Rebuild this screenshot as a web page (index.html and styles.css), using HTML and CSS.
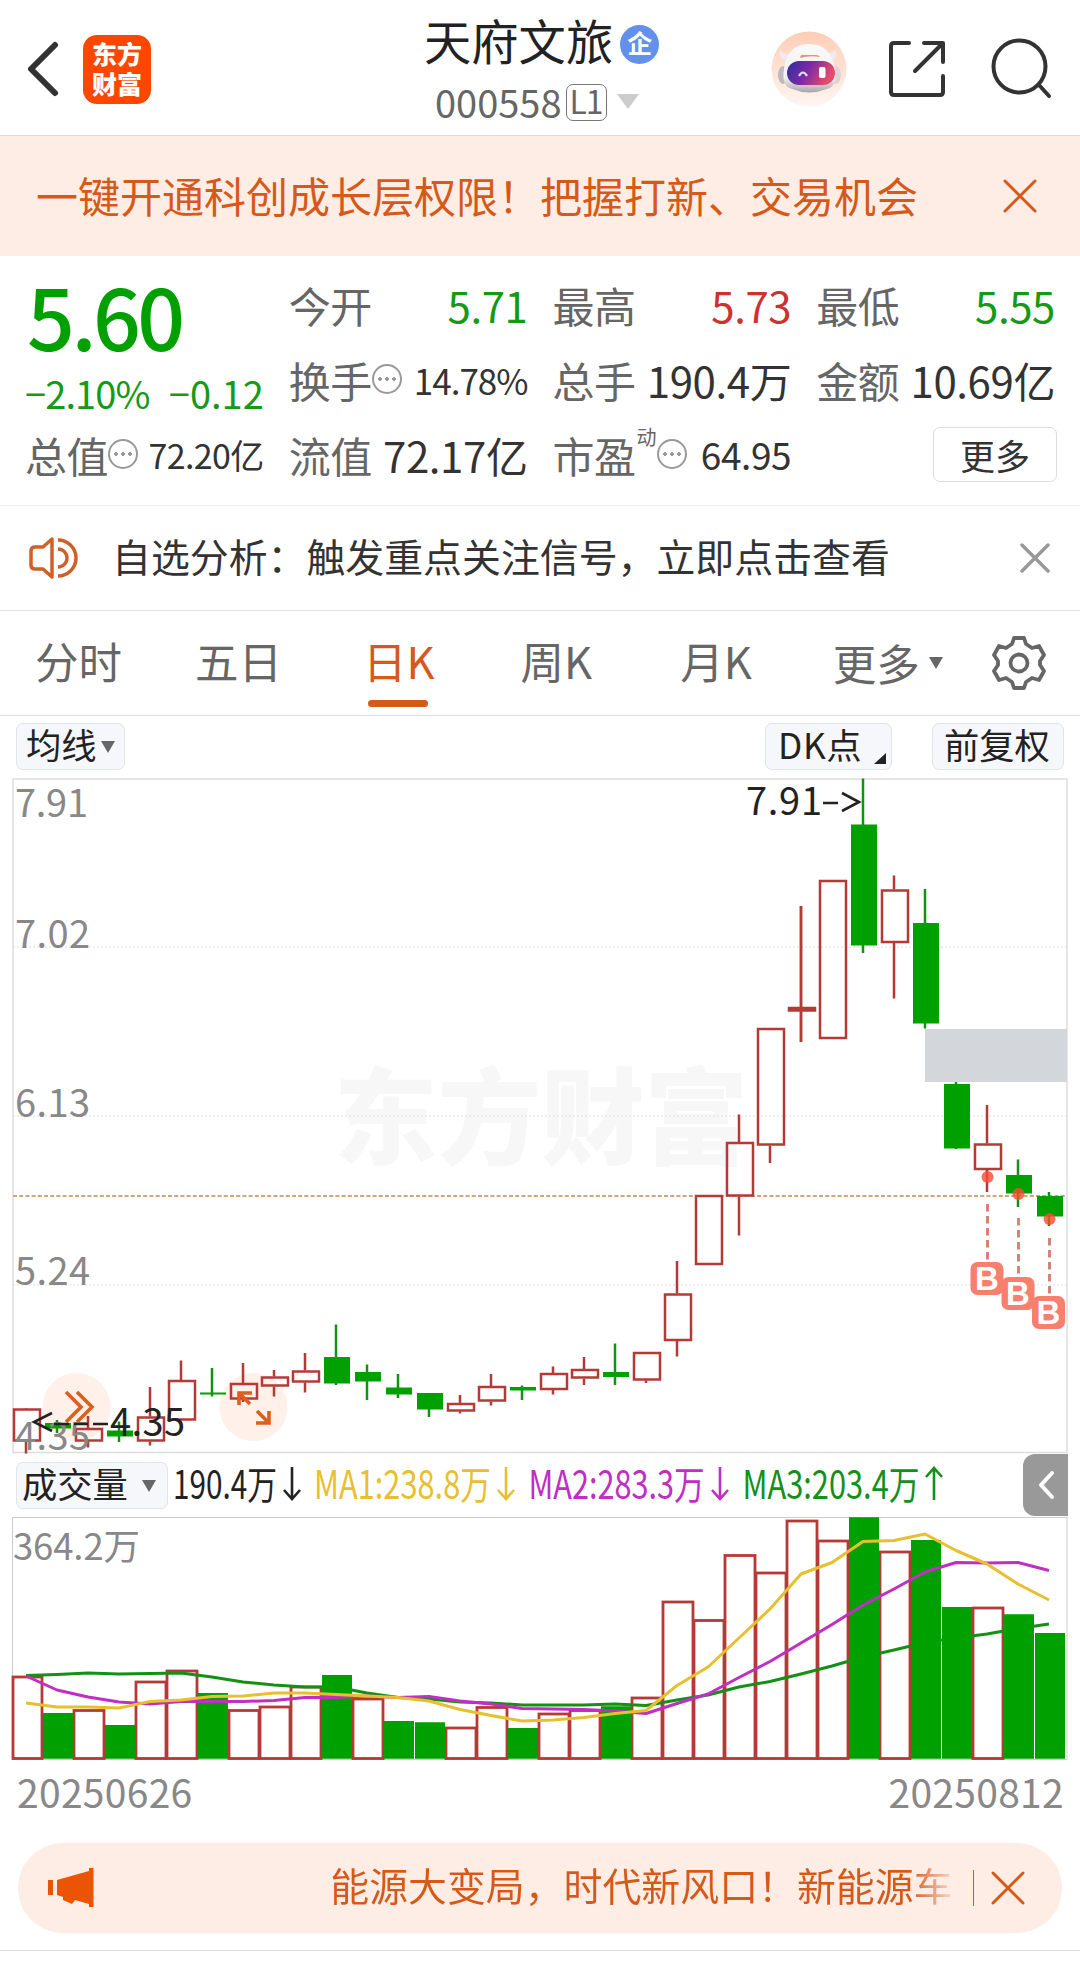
FILE: index.html
```html
<!DOCTYPE html>
<html lang="zh-CN">
<head>
<meta charset="utf-8">
<title>天府文旅 000558</title>
<link rel="stylesheet" href="styles.css">
</head>
<body>
<header class="topbar">
  <div class="topbar-left">
    <svg class="back" width="34" height="58" viewBox="0 0 34 58" fill="none" stroke="#333" stroke-width="6" stroke-linecap="round" stroke-linejoin="round"><path d="M29 5 5 29 29 53"/></svg>
    <div class="logo"><span>东方</span><span>财富</span></div>
  </div>
  <div class="stock">
    <div class="stock-name">天府文旅<span class="badge">企</span></div>
    <div class="stock-code"><span>000558</span><span class="level">L1</span><i class="tri tri-lg"></i></div>
  </div>
  <div class="topbar-right">
    <svg width="76" height="76" viewBox="0 0 76 76">
      <defs>
        <linearGradient id="halo" x1="0" y1="0" x2="0" y2="1"><stop offset="0" stop-color="#ffcdb5"/><stop offset="1" stop-color="#fff6f2"/></linearGradient>
        <linearGradient id="visor" x1="0" y1="0" x2="1" y2="0.3"><stop offset="0" stop-color="#2c2f9c"/><stop offset=".5" stop-color="#7b2aa8"/><stop offset="1" stop-color="#e84a68"/></linearGradient>
        <linearGradient id="shell" x1="0" y1="0" x2="0" y2="1"><stop offset="0" stop-color="#fbfafa"/><stop offset=".7" stop-color="#f1eeef"/><stop offset="1" stop-color="#aaa5aa"/></linearGradient>
      </defs>
      <circle cx="38" cy="38" r="37.500" fill="url(#halo)"/>
      <ellipse cx="12" cy="44" rx="5" ry="9" fill="#bdb9bd"/><ellipse cx="65" cy="44" rx="5" ry="9" fill="#ddd3d5"/>
      <path d="M9 18q-2 10 7 13l6-8q-9 2-13-5zM64 18q4 9-4 13l-8-9q9 2 12-4z" fill="#efeaeb"/>
      <path d="M13 38Q16 13 38 13T64 38Q67 55 56 58Q38 65 21 58Q10 55 13 38Z" fill="url(#shell)"/>
      <path d="M29 27q1-4 4-3h12q3 0 4 2-10-2-20 1z" fill="#d99a72"/>
      <rect x="16" y="30" width="48" height="24" rx="12" fill="url(#visor)"/>
      <path d="M28 45q4-7 8 0" stroke="#e5dcff" stroke-width="2.200" fill="none"/><rect x="48" y="36" width="6.500" height="11" rx="2" fill="#fff"/>
    </svg>
    <svg width="60" height="60" viewBox="0 0 60 60" fill="none" stroke="#333" stroke-width="4" stroke-linecap="round" stroke-linejoin="round"><path d="M22 4H7Q4 4 4 7V53Q4 56 7 56H53Q56 56 56 53V37M37 4H56V23M55 5 28 32"/></svg>
    <svg width="62" height="62" viewBox="0 0 62 62" fill="none" stroke="#333" stroke-width="4" stroke-linecap="round"><circle cx="28.500" cy="28.500" r="26"/><path d="M48 47 58 58"/></svg>
  </div>
</header>

<section class="promo">
  <span>一键开通科创成长层权限！把握打新、交易机会</span>
  <svg width="34" height="34" viewBox="0 0 34 34" stroke="#d6591a" stroke-width="3" stroke-linecap="round"><path d="M2 2 32 32M32 2 2 32"/></svg>
</section>

<section class="quote">
  <div class="price-box">
    <div class="price">5.60</div>
    <div class="change"><span>−2.10%</span><span>−0.12</span></div>
  </div>
  <div class="cell"><span>今开</span><b class="down">5.71</b></div>
  <div class="cell"><span>最高</span><b class="up">5.73</b></div>
  <div class="cell"><span>最低</span><b class="down">5.55</b></div>
  <div class="cell"><span>换手</span><i class="info"></i><b class="v35">14.78%</b></div>
  <div class="cell"><span>总手</span><b>190.4万</b></div>
  <div class="cell"><span>金额</span><b>10.69亿</b></div>
  <div class="cell"><span>总值</span><i class="info"></i><b class="v34">72.20亿</b></div>
  <div class="cell"><span>流值</span><b>72.17亿</b></div>
  <div class="cell"><span>市盈</span><sup>动</sup><i class="info"></i><b class="v37">64.95</b></div>
  <div class="cell cell-end"><button class="more">更多</button></div>
</section>

<section class="notice">
  <svg width="50" height="42" viewBox="0 0 50 42" fill="none" stroke="#d0602a" stroke-width="3.500" stroke-linejoin="round"><path d="M23 2 14 10H6Q2 10 2 14V28Q2 32 6 32H14L23 40Z"/><path d="M29 3A18 18 0 0 1 29 39M29 12A9 9 0 0 1 29 30"/></svg>
  <span>自选分析：触发重点关注信号，立即点击查看</span>
  <svg width="30" height="30" viewBox="0 0 30 30" stroke="#999" stroke-width="3.500" stroke-linecap="round"><path d="M2 2 28 28M28 2 2 28"/></svg>
</section>

<nav class="tabs">
  <span>分时</span><span>五日</span><span class="active">日K</span><span>周K</span><span>月K</span>
  <span class="tab-more">更多<i class="tri tri-sm"></i></span>
  <svg width="54" height="54" viewBox="0 0 54 54" fill="none" stroke="#666" stroke-width="3.800" stroke-linejoin="round"><path d="M22 2H32L34 8 40 12 47 10 52 19 48 25V29L52 35 47 44 40 42 34 46 32 52H22L20 46 14 42 7 44 2 35 6 29V25L2 19 7 10 14 12 20 8Z"/><circle cx="27" cy="27" r="8.500"/></svg>
</nav>

<div class="tools">
  <button class="chip chip-ma"><span>均线</span><i class="tri tri-sm"></i></button>
  <button class="chip chip-dk"><span>DK点</span><i class="corner"></i></button>
  <button class="chip chip-fq"><span>前复权</span></button>
</div>

<svg class="kline" width="1080" height="681" viewBox="0 773 1080 681">
  <text class="mark" x="334" y="1156" textLength="414" lengthAdjust="spacingAndGlyphs">东方财富</text>
  <g class="grid"><path d="M13 947H1067M13 1116H1067M13 1285H1067"/></g>
  <rect class="frame" x="13" y="779" width="1054" height="673.500"/>
  <rect x="925" y="1029" width="142" height="53" fill="#d3d6db"/>
  <path d="M13 1196H1067" stroke="#cfa57c" stroke-width="1.800" stroke-dasharray="4 2.200"/>
  <g class="bubble"><circle cx="76.500" cy="1407" r="34"/><circle cx="253.500" cy="1407" r="34"/></g>
  <g id="candles"></g>
  <g class="bubble-icon"><path d="M66 1392 81 1407 66 1422M77 1392 92 1407 77 1422"/><path d="M239 1405V1393H252M239 1393 250 1404M269 1411V1423H256M269 1423 257 1411"/></g>
  <g class="axis">
    <text x="15" y="817" textLength="73">7.91</text>
    <text x="15" y="948" textLength="75">7.02</text>
    <text x="15" y="1117" textLength="75">6.13</text>
    <text x="15" y="1285" textLength="75">5.24</text>
    <text x="15" y="1450" textLength="75">4.35</text>
  </g>
  <g class="extreme">
    <text x="746" y="815" textLength="76">7.91</text><path d="M823 803H838M842 793 859 802 842 811"/>
    <text x="110" y="1435.500" textLength="75">4.35</text><path d="M52 1413 34 1422 52 1431M54 1424H69M74 1424H88M93 1424H108"/>
  </g>
  <g class="buy-line"><path d="M987.500 1204V1260M1018.500 1218V1275M1049.500 1238V1294"/></g>
  <g fill="#fa4b32" opacity=".8"><circle cx="987.500" cy="1177" r="6"/><circle cx="1018.500" cy="1194" r="6"/><circle cx="1049.500" cy="1219" r="6"/></g>
  <g class="buy">
    <rect x="970.500" y="1262" width="33" height="33" rx="7"/><text x="987" y="1290">B</text>
    <rect x="1001.500" y="1277" width="33" height="33" rx="7"/><text x="1018" y="1305">B</text>
    <rect x="1032" y="1296" width="33" height="33" rx="7"/><text x="1048.500" y="1324">B</text>
  </g>
</svg>

<div class="vol-head">
  <button class="chip chip-vol"><span>成交量</span><i class="tri tri-sm"></i></button>
  <svg width="790" height="60" viewBox="170 1455 790 60" class="vol-ma">
    <g fill="#222" stroke="#222"><text x="173" y="1498.500" textLength="104" lengthAdjust="spacingAndGlyphs">190.4万</text><path d="M292 1467V1499M284 1490 292 1499 300 1490"/></g>
    <g fill="#e8bf2f" stroke="#e8bf2f"><text x="314" y="1498.500" textLength="177" lengthAdjust="spacingAndGlyphs">MA1:238.8万</text><path d="M506 1467V1499M498 1490 506 1499 514 1490"/></g>
    <g fill="#c02ec4" stroke="#c02ec4"><text x="528.500" y="1498.500" textLength="176" lengthAdjust="spacingAndGlyphs">MA2:283.3万</text><path d="M720 1467V1499M712 1490 720 1499 728 1490"/></g>
    <g fill="#14901a" stroke="#14901a"><text x="742.500" y="1498.500" textLength="177" lengthAdjust="spacingAndGlyphs">MA3:203.4万</text><path d="M934 1500V1468M926 1477 934 1468 942 1477"/></g>
  </svg>
  <button class="drawer"><svg width="20" height="34" viewBox="0 0 20 34" fill="none" stroke="#fff" stroke-width="4" stroke-linecap="round" stroke-linejoin="round"><path d="M15 5 4 17 15 29"/></svg></button>
</div>

<svg class="volume" width="1080" height="245" viewBox="0 1516 1080 245">
  <rect x="12.500" y="1517.500" width="1054.500" height="242" fill="none" stroke="#ccc"/>
  <g id="bars"></g>
  <g id="averages" fill="none" stroke-width="3" stroke-linejoin="round"></g>
  <text class="vol-max" x="13" y="1560" textLength="127">364.2万</text>
</svg>

<div class="dates"><span>20250626</span><span>20250812</span></div>

<section class="ticker">
  <svg width="46" height="42" viewBox="0 0 46 42" fill="#ea5404"><path d="M0 13H5V28H0ZM9 13 41 4V1H45.500V40H41V37L27 33 24 37 15 33V30L9 28Z"/></svg>
  <span class="ticker-text">能源大变局，时代新风口！新能源车</span>
  <i class="divider"></i>
  <svg width="34" height="34" viewBox="0 0 34 34" stroke="#d6591a" stroke-width="3" stroke-linecap="round"><path d="M2 2 32 32M32 2 2 32"/></svg>
</section>
<script src="chart.js"></script>
</body>
</html>
```
FILE: styles.css
```css
* { box-sizing: border-box; }
body {
  margin: 0;
  width: 1080px;
  height: 1961px;
  overflow: hidden;
  background: #fff;
  color: #333;
  font-family: "Noto Sans CJK SC", "Noto Sans", sans-serif;
}
svg { display: block; flex: none; }
button { font: inherit; color: inherit; margin: 0; padding: 0; }
b { font-weight: 400; }

.topbar {
  height: 136px;
  display: grid;
  grid-template-columns: 424px 1fr 309px;
  border-bottom: 1px solid #dcdcdc;
}
.topbar-left { display: flex; align-items: center; padding-left: 26px; height: 138px; }
.logo {
  width: 68px; height: 69px; margin-left: 23px;
  border-radius: 14px; background: #fd4600; color: #fff;
  display: flex; flex-direction: column; align-items: center; justify-content: center;
  font-size: 25px; line-height: 30px; font-weight: 900; padding-bottom: 3px;
}
.stock-name { display: flex; align-items: center; height: 80px; font-size: 47.3px; line-height: 80px; color: #222; }
.badge {
  width: 39px; height: 39px; margin: 9px 0 0 7px; border-radius: 50%;
  background: #6390ea; color: #fff; font-size: 25px; line-height: 35px; font-weight: 700; text-align: center;
}
.stock-code { display: flex; align-items: center; height: 43px; padding-left: 11px; font-size: 38px; line-height: 40px; color: #666; }
.level {
  width: 41px; height: 37px; margin: 2px 0 0 4px; border: 1.5px solid #777; border-radius: 7px;
  font-size: 32px; line-height: 31px; text-align: center; letter-spacing: -1px;
}
.tri { display: block; flex: none; border: solid transparent; border-bottom-width: 0; }
.tri-lg { border-width: 15px 11px 0; border-top-color: #ccc; margin-left: 10px; }
.tri-sm { border-width: 12px 7.5px 0; border-top-color: #666; }
.topbar-right { display: flex; align-items: center; height: 138px; gap: 40px; }
.topbar-right svg:last-child { margin-left: 4px; }

.promo {
  height: 120px; padding: 0 43px 0 36px;
  display: flex; align-items: center; justify-content: space-between;
  background: #fdede4; color: #d6591a; font-size: 42px; line-height: 116px;
}
.promo span { margin-top: -3px; }

.quote {
  height: 250px; padding: 12px 25px 0;
  display: grid; column-gap: 25px;
  grid-template-columns: repeat(4, 1fr); grid-template-rows: 75px 75px 75px;
  border-bottom: 1px solid #eee;
}
.price-box { grid-row: span 2; color: #00a000; }
.price { height: 97px; padding-left: 2px; font-size: 84px; line-height: 94px; font-weight: 500; letter-spacing: -3.5px; }
.change { display: flex; justify-content: space-between; font-size: 38px; line-height: 56px; color: #149a14; }
.change span:first-child { letter-spacing: -.9px; }
.cell { display: flex; align-items: center; font-size: 42px; line-height: 75px; color: #666; white-space: nowrap; }
.cell > span, .cell > b { margin-top: -3px; }
.cell > span { letter-spacing: -.5px; }
.cell b { margin-left: auto; color: #333; letter-spacing: -.4px; }
.cell .down { color: #149a14; }
.cell .up { color: #d0302e; }
.cell .v35 { font-size: 35px; letter-spacing: -1px; }
.cell .v34 { font-size: 34px; letter-spacing: -.6px; }
.cell .v37 { font-size: 37px; }
.cell sup { font-size: 20px; line-height: 20px; align-self: flex-start; margin: 9px 0 0 1px; }
.info {
  width: 30px; height: 30px; margin-top: -4px; border: 2px solid #999; border-radius: 50%;
  background:
    radial-gradient(circle 2px, #999 90%, transparent) -7px 0 / 100% 100% no-repeat,
    radial-gradient(circle 2px, #999 90%, transparent) 0 0 / 100% 100% no-repeat,
    radial-gradient(circle 2px, #999 90%, transparent) 7px 0 / 100% 100% no-repeat;
}
.cell-end { justify-content: flex-end; }
.more { width: 124px; height: 55px; margin: -2px -2px 0 0; border: 1.5px solid #ddd; border-radius: 7px; background: #fff; color: #333; font-size: 35px; line-height: 46px; }

.notice {
  height: 105px; padding: 0 30px 0 29px; display: flex; align-items: center;
  border-bottom: 1px solid #dfe2e2; font-size: 38.9px; line-height: 100px;
}
.notice span { margin: -7px auto 0 33px; }

.tabs {
  height: 105px; padding: 0 34px 0 35px; display: flex; align-items: center;
  border-bottom: 1px solid #dfe2e2; color: #666; font-size: 43.5px; line-height: 100px;
}
.tabs > span { height: 104px; margin-right: 73px; position: relative; }
.tabs > span:nth-child(2) { margin-right: 81px; }
.tabs > span:nth-child(3) { margin-right: 86px; }
.tabs > span:nth-child(4) { margin-right: 88px; }
.tabs > span:nth-child(5) { margin-right: 81px; }
.tabs .active { color: #d6591a; }
.tabs .active::after {
  content: ""; position: absolute; left: 5px; top: 89px; width: 60px; height: 7px; border-radius: 4px; background: #d6591a;
}
.tabs .tab-more { display: flex; align-items: center; gap: 9px; margin-right: auto; }

.tools { height: 57px; padding: 7px 16px 0; display: flex; align-items: flex-start; }
.chip {
  height: 47px; border: 1.5px solid #e1e4e8; border-radius: 7px; background: #f5f7fa; color: #222;
  display: flex; align-items: center; font-size: 35.3px; line-height: 40px;
}
.chip span { margin-top: -5px; white-space: nowrap; }
.chip-ma { width: 109px; padding-left: 9px; gap: 4px; }
.chip-dk { width: 127px; margin-left: auto; padding-left: 12px; position: relative; }
.chip-dk span { letter-spacing: .6px; }
.chip-fq { width: 132px; margin-left: 40px; padding-left: 11px; }
.corner { position: absolute; right: 5px; bottom: 5px; border-style: solid; border-width: 0 0 11px 12px; border-color: transparent transparent #222; }

.frame { fill: none; stroke: #ddd; stroke-width: 1.5; }
.grid path { stroke: #ddd; stroke-width: 1; stroke-dasharray: 2 2; }
.mark { font-size: 105px; font-weight: 900; fill: #f7f7f7; }
.axis text { font-size: 38px; fill: #888; }
.extreme { fill: #222; font-size: 38px; }
.extreme path { fill: none; stroke: #222; stroke-width: 2.6; }
.bubble circle { fill: #fff0e9; }
.bubble-icon path { fill: none; stroke: #d9601f; stroke-width: 3.6; }
.buy-line path { stroke: #d48476; stroke-width: 3; stroke-dasharray: 7.500 4.500; }
.buy rect { fill: #f77f6e; }
.buy text { fill: #fff; font: 700 33px "Liberation Sans", sans-serif; text-anchor: middle; }
.red-body { fill: #fff; stroke: #b53a37; stroke-width: 2.8; }
.red-line, .red-open { fill: none; stroke: #b53a37; stroke-width: 2.5; }
.green-body { fill: #00a000; }
.green-line { stroke: #149014; stroke-width: 2.5; }

.vol-head { height: 62px; display: flex; align-items: flex-start; padding-left: 16px; }
.chip-vol { width: 152px; margin-top: 8px; padding-left: 5px; gap: 14px; }
.vol-ma { margin: 1px 0 0 2px; }
.vol-ma text { font-size: 39px; stroke: none; }
.vol-ma path { fill: none; stroke-width: 2.6; }
.drawer { width: 45px; height: 62px; margin-left: auto; margin-right: 12px; border: 0; border-radius: 12px 0 0 12px; background: #999; display: flex; align-items: center; padding-left: 14px; }
.vol-max { font-size: 36.5px; fill: #888; }

.dates { height: 82px; padding: 0 16px 0 17px; display: flex; justify-content: space-between; color: #888; font-size: 39px; line-height: 60px; letter-spacing: .3px; }

.ticker {
  height: 90px; margin: 0 18px; padding: 0 37px 0 30px; border-radius: 45px; background: #fdede4;
  display: flex; align-items: center; color: #d6591a; font-size: 38.9px; line-height: 80px;
}
.ticker-text {
  margin: -8px 0 0 auto;
  background: linear-gradient(90deg, #d6591a 93%, #f8d9c8 100%);
  -webkit-background-clip: text; background-clip: text; color: transparent;
}
.divider { width: 1.5px; height: 36px; margin: 0 17px 0 20px; background: #d6591a; }
body::after { content: ""; display: block; margin-top: 17px; border-top: 1px solid #dfe2e2; }
```
FILE: chart.js
```js
const STEP = 31, FIRST = 26, FLOOR = 1758.5;
// colour, high, body top, body bottom, low, volume bar top
const days = [
  ["r",1408,1408.5,1441.5,1453.5,1676],["g",1420,1423,1428.5,1433,1713],["r",1416,1428,1441.5,1447.5,1709.5],
  ["g",1421.5,1430.5,1436.5,1442,1725],["r",1387,1416.5,1441.5,1445.5,1681],["r",1360.5,1380,1420.5,1420.5,1670],
  ["g",1368,1392.5,1394.5,1396.5,1693],["r",1363,1383,1399.5,1402,1709.5],["r",1370,1376.5,1386.5,1396.5,1706],
  ["r",1353,1370.5,1382.5,1392.5,1686],["g",1324.5,1357,1383.5,1385,1675],["g",1364.5,1372,1381.5,1400,1698,"r"],
  ["g",1374,1387.5,1394.5,1398,1721],["g",1393,1393,1409.5,1417,1722.5],["r",1395,1403,1411.5,1413.5,1727],
  ["r",1374,1386,1401.5,1405.5,1706.5],["g",1385.5,1387,1390.5,1400,1728],["r",1366.5,1373,1390,1394.5,1713],
  ["r",1357,1369,1378.5,1385,1709.5],["g",1343.5,1372,1377,1385,1706.5],["r",1352,1352,1380.5,1383,1697],
  ["r",1261,1293.5,1341,1356.5,1601],["r",1195,1195,1265,1265,1619.5],["r",1114.5,1142,1196.5,1235.5,1554.5],
  ["r",1028,1028,1145.5,1163,1572],["r",906,1007,1011.5,1042,1520],["r",880,880,1039,1039,1540],
  ["g",778.5,824.5,945.5,953,1517.5],["r",875.5,889.5,943,998.5,1551],["g",889,923,1023.5,1028.5,1540],
  ["g",1082,1084,1148.5,1149,1607],["r",1105,1143.5,1170,1192,1607],["g",1159.5,1175,1193.5,1207,1614.5],
  ["g",1192,1196,1216.5,1226,1633]
];
const lines = {
  "#e8bf2f": [1703,1707,1707,1708,1701.5,1700,1696.5,1696,1693,1693,1694.5,1696,1697.5,1701,1709.5,1715.5,1721,1720,1717.5,1713.5,1710.5,1685.5,1667,1638,1609,1574,1562.5,1541.5,1540.5,1534,1550.5,1564,1584,1600],
  "#c02ec4": [1676,1690,1697,1702,1704,1701.5,1701.5,1701.5,1700.5,1697.5,1697.5,1696,1697.5,1696.5,1701,1704,1708.5,1709,1709.5,1711,1713.5,1703.5,1694,1677.5,1661.5,1643,1624.5,1605,1589,1572,1562.5,1563,1562.5,1570.5],
  "#149014": [1675.5,1674.5,1673,1674,1673.5,1673,1677,1682,1685,1687,1687,1693,1697.5,1699,1702,1703,1705,1705,1705,1704,1705.5,1700,1695,1687,1681.5,1674,1666,1657,1650,1642.5,1638,1634,1628.5,1624]
};
const add = (parent, tag, attrs) => {
  const el = document.createElementNS("http://www.w3.org/2000/svg", tag);
  for (const key in attrs) el.setAttribute(key, attrs[key]);
  parent.appendChild(el);
};
const candles = document.getElementById("candles");
const bars = document.getElementById("bars");
days.forEach(([color, high, top, bottom, low, vol, volColor], i) => {
  const x = FIRST + STEP * i;
  if (color === "r") {
    add(candles, "path", { class: "red-line", d: `M${x} ${high}V${top}M${x} ${bottom}V${low}` });
    add(candles, "rect", { class: "red-open", x: x - 12, y: top + 1, width: 26, height: bottom - top - 2 });
    if (bottom - top < 5) add(candles, "path", { class: "red-line", d: `M${x} ${high}V${low}M${x - 13} ${top + 2.2}H${x + 15}` });
  } else {
    add(candles, "path", { class: "green-line", d: `M${x} ${high}V${low}` });
    add(candles, "rect", { class: "green-body", x: x - 12, y: top, width: 26, height: bottom - top });
  }
  if ((volColor || color) === "r") {
    const left = Math.max(x - 14, 13);
    add(bars, "rect", { class: "red-body", x: left, y: vol + 1, width: x + 16 - left, height: FLOOR - vol - 1 });
  } else {
    add(bars, "rect", { class: "green-body", x: x - 14, y: vol, width: 30, height: FLOOR - vol });
  }
});
const averages = document.getElementById("averages");
// bars of falling days hide the green average, the other two run over them
const drawn = Object.keys(lines).reverse();
drawn.forEach((stroke, n) => {
  const points = lines[stroke].map((y, i) => `${FIRST + STEP * i},${y}`).join(" ");
  add(averages, "polyline", { points, stroke });
  if (n > 0) return;
  days.forEach(([color, , , , , vol, volColor], i) => {
    if ((volColor || color) === "g") {
      add(averages, "rect", { class: "green-body", stroke: "none", x: FIRST + STEP * i - 14, y: vol, width: 30, height: FLOOR - vol });
    }
  });
});
```
